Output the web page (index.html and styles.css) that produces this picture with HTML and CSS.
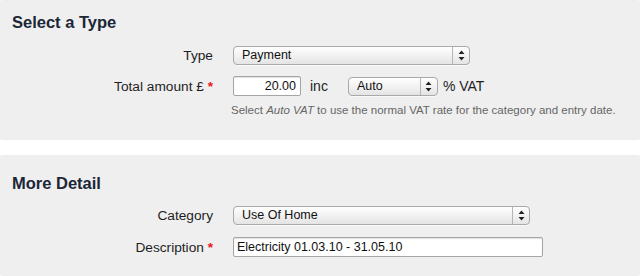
FILE: index.html
```html
<!DOCTYPE html>
<html>
<head>
<meta charset="utf-8">
<link rel="stylesheet" href="styles.css">
</head>
<body>
<section class="panel panel-first">
  <h2 class="title">Select a Type</h2>
  <div class="form">
    <div class="row">
      <div class="label">Type</div>
      <div class="field">
        <div class="select select-type">
          <span class="val">Payment</span>
          <span class="arrows"><svg width="7" height="11" viewBox="0 0 7 11"><path d="M3.5 0.5 L6.5 4 L0.5 4 Z M3.5 10.5 L6.5 7 L0.5 7 Z" fill="#222"/></svg></span>
        </div>
      </div>
    </div>
    <div class="row">
      <div class="label">Total amount £ <span class="req">*</span></div>
      <div class="field">
        <div class="input input-amount">20.00</div>
        <span class="txt inc">inc</span>
        <div class="select select-vat">
          <span class="val">Auto</span>
          <span class="arrows"><svg width="7" height="11" viewBox="0 0 7 11"><path d="M3.5 0.5 L6.5 4 L0.5 4 Z M3.5 10.5 L6.5 7 L0.5 7 Z" fill="#222"/></svg></span>
        </div>
        <span class="txt vat">% VAT</span>
      </div>
    </div>
    <div class="hint-row">
      <div class="label"></div>
      <p class="hint">Select <em>Auto VAT</em> to use the normal VAT rate for the category and entry date.</p>
    </div>
  </div>
</section>
<section class="panel panel-second">
  <h2 class="title">More Detail</h2>
  <div class="form">
    <div class="row">
      <div class="label">Category</div>
      <div class="field">
        <div class="select select-cat">
          <span class="val">Use Of Home</span>
          <span class="arrows"><svg width="7" height="11" viewBox="0 0 7 11"><path d="M3.5 0.5 L6.5 4 L0.5 4 Z M3.5 10.5 L6.5 7 L0.5 7 Z" fill="#222"/></svg></span>
        </div>
      </div>
    </div>
    <div class="row">
      <div class="label">Description <span class="req">*</span></div>
      <div class="field">
        <div class="input input-desc">Electricity 01.03.10 - 31.05.10</div>
      </div>
    </div>
  </div>
</section>
</body>
</html>
```

FILE: styles.css
```css
html, body {
  margin: 0;
  padding: 0;
  background: #ffffff;
}
body {
  font-family: "Liberation Sans", Arial, sans-serif;
  color: #1e1e1e;
  width: 640px;
  height: 276px;
  overflow: hidden;
}
.panel {
  background: #efefef;
  border-radius: 2px;
  box-sizing: border-box;
}
.panel-first {
  height: 140px;
  padding: 12px 0 0 0;
  margin-bottom: 15px;
}
.panel-second {
  height: 121px;
  padding: 18px 0 0 0;
}
.title {
  margin: 0 0 0 12px;
  font-size: 16.5px;
  line-height: 20px;
  font-weight: bold;
  color: #1b2737;
}
.form {
  display: flex;
  flex-direction: column;
  gap: 11px;
  margin-top: 13px;
}
.panel-second .form {
  margin-top: 12px;
  gap: 12px;
}
.row {
  display: flex;
  align-items: center;
  height: 20px;
}
.label {
  width: 213px;
  flex: none;
  text-align: right;
  font-size: 13.7px;
  color: #1e1e1e;
  margin-right: 20px;
}
.req {
  color: #e8141a;
  font-weight: bold;
}
.field {
  display: flex;
  align-items: center;
}
.select {
  display: flex;
  align-items: stretch;
  height: 19px;
  box-sizing: border-box;
  border: 1px solid #a9a9a9;
  border-radius: 4px;
  background: linear-gradient(#ffffff, #f3f3f3 45%, #e4e4e4);
  box-shadow: 0 1px 0 rgba(255,255,255,0.6);
  font-size: 12.5px;
  color: #111;
}
.select .val {
  flex: 1;
  padding-left: 8px;
  line-height: 17px;
}
.select .arrows {
  width: 16px;
  border-left: 1px solid #b5b5b5;
  display: flex;
  align-items: center;
  justify-content: center;
}
.select-type { width: 237px; }
.select-vat { width: 90px; }
.select-cat { width: 297px; }
.input {
  height: 20px;
  box-sizing: border-box;
  border: 1px solid #a5a5a5;
  border-radius: 2px;
  background: #ffffff;
  box-shadow: inset 0 1px 1px rgba(0,0,0,0.12);
  font-size: 12.5px;
  line-height: 18px;
  color: #111;
}
.input-amount {
  width: 68px;
  text-align: right;
  padding-right: 4px;
}
.input-desc {
  width: 310px;
  padding-left: 3px;
}
.txt {
  font-size: 14px;
  color: #1e1e1e;
}
.inc {
  margin: 0 20px 0 9px;
}
.vat {
  margin-left: 5px;
}
.hint-row {
  display: flex;
  margin-top: -4px;
}
.hint-row .label {
  margin-right: 18px;
}
.hint {
  margin: 0;
  font-size: 11.5px;
  line-height: 14px;
  color: #666;
}
```
